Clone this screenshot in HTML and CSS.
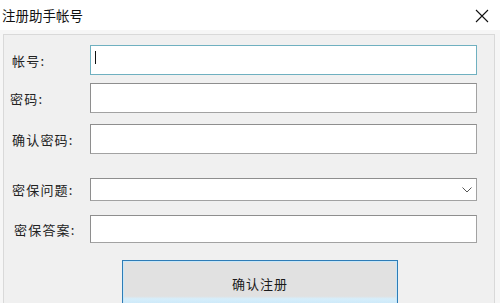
FILE: index.html
```html
<!DOCTYPE html>
<html lang="zh-CN">
<head>
<meta charset="utf-8">
<title>注册助手帐号</title>
<link rel="stylesheet" href="styles.css">
</head>
<body>
<div class="window">
  <div class="titlebar">
    <span class="title">注册助手帐号</span>
    <span class="close">
      <svg width="14" height="14" viewBox="0 0 14 14"><path d="M1 1 L13 13 M13 1 L1 13" stroke="#111" stroke-width="1.1" fill="none"/></svg>
    </span>
  </div>
  <div class="body">
    <div class="panel">
      <div class="row row-account">
        <label class="lbl">帐号:</label>
        <div class="field focused"><span class="caret"></span></div>
      </div>
      <div class="row row-pass">
        <label class="lbl">密码:</label>
        <div class="field"></div>
      </div>
      <div class="row row-confirm">
        <label class="lbl">确认密码:</label>
        <div class="field"></div>
      </div>
      <div class="row row-question">
        <label class="lbl">密保问题:</label>
        <div class="field combo">
          <svg class="chev" width="10" height="6" viewBox="0 0 10 6"><path d="M0.5 0.5 L5 5 L9.5 0.5" stroke="#555" stroke-width="1" fill="none"/></svg>
        </div>
      </div>
      <div class="row row-answer">
        <label class="lbl">密保答案:</label>
        <div class="field"></div>
      </div>
      <div class="btn-row">
        <button class="btn">确认注册</button>
      </div>
    </div>
  </div>
</div>
</body>
</html>
```
FILE: styles.css
```css
html, body {
  margin: 0;
  padding: 0;
}
body {
  width: 500px;
  height: 303px;
  overflow: hidden;
  background: #f6f6f6;
  font-family: "Noto Sans CJK SC", "Noto Sans", sans-serif;
  color: #1a1a1a;
}
.window {
  display: flex;
  flex-direction: column;
  height: 303px;
}
.titlebar {
  height: 30px;
  background: #ffffff;
  display: flex;
  align-items: center;
  justify-content: space-between;
  padding: 0 10px 0 2px;
  flex-shrink: 0;
}
.title {
  font-size: 13.5px;
  color: #111;
}
.close {
  display: flex;
  align-items: center;
  justify-content: center;
  width: 16px;
  height: 18px;
  margin-top: 1px;
}
.body {
  flex: 1;
  padding: 4px 5px 0 3px;
  display: flex;
}
.panel {
  flex: 1;
  background: #f0f0f0;
  border: 1px solid #d9d9d9;
  border-bottom: none;
  padding: 10px 17px 0 8px;
  display: flex;
  flex-direction: column;
}
.row {
  display: flex;
  align-items: center;
}
.lbl {
  width: 78px;
  font-size: 13px;
  letter-spacing: 1.2px;
  color: #222;
}
.field {
  flex: 1;
  height: 30px;
  box-sizing: border-box;
  background: #ffffff;
  border: 1px solid #a2a2a2;
  border-top-color: #8e8e8e;
  border-left-color: #8e8e8e;
  position: relative;
}
.field.focused {
  border-color: #6fb0c0;
}
.caret {
  position: absolute;
  left: 4px;
  top: 5px;
  width: 1px;
  height: 13px;
  background: #111;
}
.row-pass { margin-top: 8px; }
.row-confirm { margin-top: 11px; }
.row-question { margin-top: 24px; }
.row-question .field { height: 23px; }
.row-answer { margin-top: 14px; }
.row-answer .field { height: 28px; }
.row-answer .lbl { padding-left: 2px; width: 76px; }
.row-pass .lbl { margin-left: -2px; width: 80px; }
.combo {
  display: flex;
  align-items: center;
  justify-content: flex-end;
  padding-right: 4px;
}
.btn-row {
  margin-top: 17px;
  padding-left: 110px;
}
.btn {
  width: 276px;
  height: 46px;
  box-sizing: border-box;
  border: 1px solid #2e7cb6;
  background: linear-gradient(#e1e1e1 0, #e1e1e1 80%, #d6eefb 86%, #cbe8f8 100%);
  box-shadow: inset 0 0 0 1px #c9e7f8;
  font-family: "Noto Sans CJK SC", "Noto Sans", sans-serif;
  font-size: 13px;
  letter-spacing: 1px;
  color: #1a1a1a;
  padding: 0;
}
```
